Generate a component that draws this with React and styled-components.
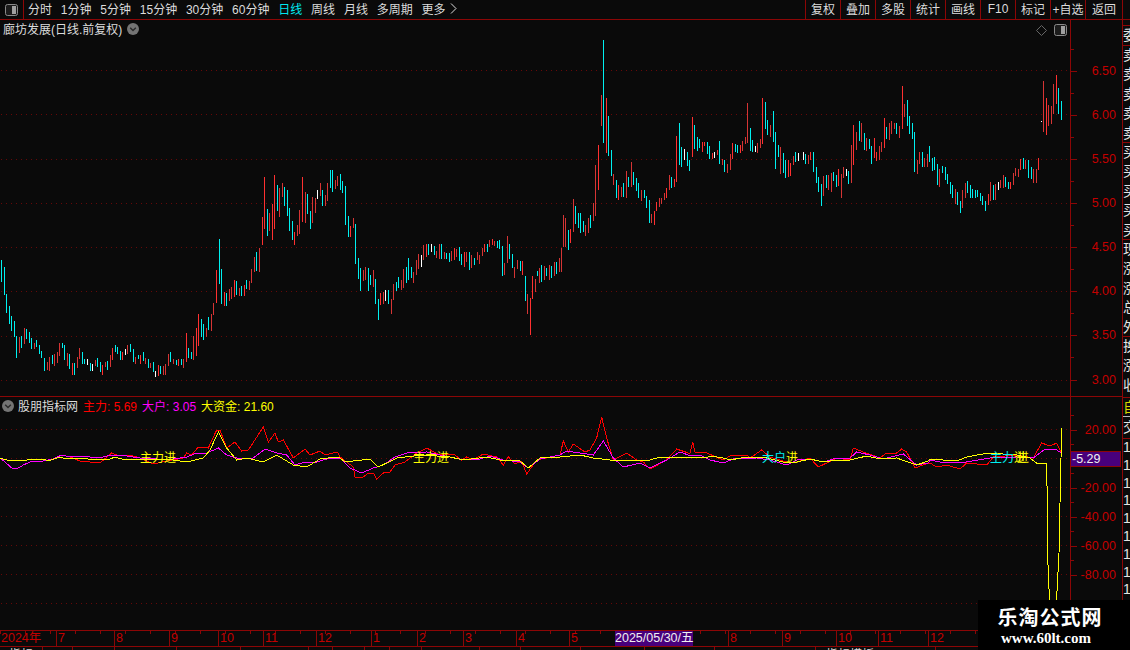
import React from "react";
import styled, { createGlobalStyle } from "styled-components";

const LINE = "#8c0606";
const CJK = '"Liberation Sans", "Noto Sans CJK SC", sans-serif';

const GlobalStyle = createGlobalStyle`
  html, body { margin: 0; padding: 0; background: #0a0a0a; overflow: hidden; }
  * { box-sizing: border-box; }
`;

// candle data, read off the picture: x y-top y-bottom colour (in 3x units)
const CANDLE_SEGMENTS = [
  [0, 170, "4 270 335 c|13 291 375 c|19 372 428 c|28 408 461 c|34 438 483 c|43 453 501 c|49 498 564 c|58 501 549 d|64 498 534 c|73 474 522 d|79 477 507 c|88 486 519 c|94 504 537 c|103 519 537 d|109 510 531 c|118 525 552 c|124 543 564 c|133 564 603 c|142 576 600 d|148 561 603 d|157 555 582 c|163 552 588 d|172 546 579 d|178 519 558 d|187 519 534 c|193 525 570 c|202 549 588 d|208 552 597 c|217 579 615 r|223 579 615 c|232 561 594 d|238 534 567 d|247 546 582 c|253 567 582 c|262 567 585 w|271 579 603 c|277 582 603 w|286 570 588 d|292 564 591 c|301 576 606 c|307 585 615 r|316 576 591 d|322 573 600 c|331 555 591 d|337 534 570 r|346 525 546 c|352 531 552 c|361 543 570 c|367 546 570 r|376 537 555 w|382 525 552 d|391 522 546 c|400 537 576 c|406 561 582 d|415 555 567 c|421 555 582 r|430 546 573 c|436 564 582 d|445 567 594 c|451 579 594 d|460 576 606 c|466 603 621 w|475 585 618 r|481 588 612 c|490 588 615 d|496 582 615 d|505 552 588 d|511 546 576 c|520 567 582 d|529 570 585 c|535 567 588 r|544 567 585 c|550 567 594 d|559 489 576 r|565 534 564 c|574 546 567 c|580 498 570 d|589 474 558 r|595 432 528 r|604 447 501 c|610 462 510 c|619 474 501 d|625 441 480 c|634 432 483 d|640 399 435 d|649 300 399 r|658 207 342 c|664 297 402 c|673 366 408 r|679 369 408 c|688 357 393 d|694 351 387 d|703 330 381 r|709 333 375 c|718 354 378 d|724 348 378 c|733 345 378 r|739 330 357 c|748 333 360 d|754 297 339 d|763 261 306 d|769 246 303 c|778 234 306 d|787 141 225 r|793 21 177 r|802 117 198 c|808 129 183 d|817 102 210 r|823 15 177 r|832 45 123 c|838 54 141 d|847 39 81 d|853 51 108 c|862 60 138 c|868 114 183 c|877 153 210 c|883 186 225 r|892 165 198 d|898 120 192 d|907 21 156 r|916 66 159 d|922 72 132 c|931 123 177 c|937 81 159 d|946 84 129 d|952 60 87 w|961 39 78 d|967 60 108 c|976 75 108 d|982 39 93 d|991 0 54 c|997 0 66 c|1006 30 57 d|1012 18 48 d|1021 12 60 c|1027 33 69 c|1036 48 165 c|1045 138 201 c"],
  [340, 170, "31 168 201 r|40 144 174 d|46 162 282 c|55 264 327 c|61 294 363 c|70 300 333 d|76 291 330 d|85 294 363 c|91 315 345 c|100 300 351 d|106 327 402 c|115 387 450 c|121 369 405 r|130 366 402 d|136 360 393 w|145 360 402 c|154 387 432 d|160 342 390 d|169 336 363 c|175 321 354 c|184 330 360 d|190 297 354 d|199 291 339 c|205 264 330 c|214 291 324 c|220 306 339 d|229 270 315 d|235 252 297 d|244 255 291 w|250 225 270 d|259 222 261 r|265 222 255 c|274 222 246 w|283 228 255 c|289 243 264 d|298 222 267 d|304 222 267 c|313 246 267 d|319 249 267 c|328 249 276 c|334 243 273 d|343 234 270 r|349 237 261 d|358 231 273 c|364 252 285 c|373 246 291 r|379 246 276 d|388 246 300 c|394 255 294 d|403 264 285 c|412 246 270 d|418 255 282 d|427 234 258 d|433 222 246 r|442 222 246 c|448 210 231 d|457 207 225 r|463 213 228 d|472 213 234 c|478 210 237 c|487 228 318 c|493 279 315 d|502 198 279 d|508 222 267 c|517 252 294 c|523 291 324 d|532 270 297 d|541 273 303 c|547 273 315 r|556 318 393 c|562 372 432 d|571 384 495 r|577 318 387 r|586 327 366 d|592 303 318 c"],
  [538, 230, "4 114 159 d|10 105 156 c|19 108 150 d|25 114 138 c|34 105 150 d|40 108 144 c|49 96 138 d|55 96 132 c|64 84 126 d|70 54 126 d"],
  [500, 30, "190 555 650 d|196 564 650 d|205 600 660 c|211 597 640 r|220 507 606 d|226 528 582 c|235 549 594 c|241 549 609 c|250 573 606 c|256 585 618 d|265 564 609 d|271 555 594 c|280 519 573 d|286 405 558 d|295 345 480 r|304 195 288 d|310 30 339 c|319 204 369 r|325 258 378 c|334 360 438 c|340 432 465 d|349 450 504 c|355 465 510 r|364 471 501 d|370 459 501 c|379 423 504 d|385 441 471 c|394 396 471 d|400 426 465 c|409 444 483 c|415 459 504 c|424 480 513 d|433 480 504 c|439 498 534 c|448 510 579 c|454 552 579 d|463 543 585 r|469 516 543 r|478 504 531 d|484 504 522 d|493 489 510 d|499 474 504 r|508 435 480 d|514 441 474 c|523 447 471 r|529 318 456 r|538 279 405 c|544 351 411 c|553 357 390 w|562 366 408 c|568 390 423 c|577 261 381 r|583 285 357 c|592 321 363 c|598 327 354 c|607 336 366 r|613 336 348 r|622 336 372 c|628 348 387 c|637 369 387 r|643 366 384 w|652 360 375 d|658 333 402 c|667 387 405 d|673 390 426 c|682 402 429 d|691 372 420 d|697 339 387 r|706 342 366 c|712 345 369 c|721 345 369 r|727 333 363 d|736 321 342 d|742 219 339 d|751 294 363 c|757 330 366 c|766 348 366 w|772 339 369 d|781 327 354 d|787 204 342 r|796 216 297 c|802 270 315 c|811 285 321 d|820 243 336 c|826 306 417 c|835 345 381 c|841 351 432 d|850 369 429 c|856 390 444 c|865 390 441 r|871 399 438 r|880 378 405 d|886 366 396 c|895 369 393 w"],
  [800, 70, "10 246 270 w|16 252 282 c|25 255 282 d|31 246 270 r|40 246 306 c|49 291 339 c|55 321 366 c|64 342 408 c|70 318 378 d|79 315 354 c|85 315 360 d|94 309 366 d|100 306 333 c|109 315 351 c|115 297 348 r|124 312 384 d|130 291 324 d|139 297 318 w|145 303 342 c|154 225 339 d|160 165 285 r|169 186 240 d|178 153 213 c|184 159 216 d|193 189 240 c|199 204 243 d|208 207 237 c|214 228 282 c|223 204 264 r|229 246 273 r|238 228 270 d|244 216 246 d|253 144 234 r|259 171 207 c|268 159 210 d|274 153 192 d|283 159 177 d|289 159 192 c|298 168 204 d|307 48 177 r|313 102 141 d|322 90 168 c|328 138 192 c|337 159 207 c|343 186 306 c|352 270 312 d|358 246 282 d|367 246 291 c|373 264 291 d|382 252 291 d|388 228 276 c|397 264 303 c|403 261 300 c|412 282 345 c|418 297 351 d|427 288 309 c|436 291 330 c|442 312 342 c|451 336 372 c|457 345 384 c|466 357 402 d|472 366 405 c|481 393 429 c|487 360 414 d|496 339 384 d|502 333 369 c|511 345 384 c|517 357 384 c|526 360 384 c|532 360 381 c|541 369 393 c|547 378 405 c|556 393 423 c|565 372 405 r|571 336 393 d|580 345 390 c|586 342 390 d|595 336 360 w|601 330 354 d|610 315 354 d|616 321 351 c|625 336 357 c|631 336 357 r|640 309 345 d|646 294 318 d|655 297 321 d|661 267 300 r|670 264 297 c|676 270 297 d|685 270 324 c|694 291 327 c|700 297 339 d|709 297 339 d|715 264 300 r|724 153 156 w|730 33 186 d|739 84 195 r|745 105 168 d|754 108 162 d|760 42 132 d|769 15 102 r|775 54 132 c|784 93 150 c"],
];

const CANDLE_COLORS = { r: "#ff3030", d: "#d63434", c: "#00f0f0", w: "#ffffff" };

const candles = CANDLE_SEGMENTS.flatMap(([x0, y0, list]) =>
  list.split("|").map((item) => {
    const [x, top, bottom, color] = item.split(" ");
    return {
      x: x0 + Math.floor(Number(x) / 3),
      y: y0 + Number(top) / 3,
      h: (Number(bottom) - Number(top)) / 3,
      color: CANDLE_COLORS[color],
    };
  })
);

// indicator lines, same idea: each piece has its own origin
const toPoints = (pieces) =>
  pieces
    .map(([x0, y0, list]) =>
      list
        .split(" ")
        .map((pair) => {
          const [x, y] = pair.split(",").map(Number);
          return `${x0 + x / 3},${Math.round(y0 + y / 3)}`;
        })
        .join(" ")
    )
    .join(" ");

const MAGENTA_LINE = toPoints([
  [0, 390, "0,205 15,215 35,235 50,238 70,225 90,215 130,212 160,208 185,195 210,200 240,198 270,200 300,205 330,195 380,197 420,205 470,208 520,208 560,200 590,190 620,188 655,175 680,195 710,205 760,205 795,178 830,188 860,195 885,225 915,215 950,215 990,205 1015,205"],
  [340, 410, "0,145 30,175 65,190 100,175 130,165 165,140 200,130 260,125 300,135 360,148 420,148 450,138 490,150 540,155 565,175 600,148 660,135 680,122 720,130 760,135 790,92 820,145 850,172 900,160 930,175 980,150 1020,125 1045,135"],
  [690, 410, "0,135 30,135 60,150 100,158 130,148 200,145 240,150 290,165 320,150 360,148 400,157 440,145 480,145 500,125 540,135 580,148 640,133 680,165 715,160"],
  [930, 390, "0,210 30,215 90,220 180,205 260,200 310,205 345,178 380,180 395,190"],
]);

const RED_LINE = toPoints([
  [0, 390, "0,205 15,215 35,235 50,238 70,225 90,215 130,212 160,208 185,195 210,200 240,212 270,215 300,220 335,188 350,195 390,195 420,205 460,222 500,212 550,205 560,190 575,195 595,170 625,175 650,120 660,120 680,175 705,155 725,182 745,180 790,110 805,155 825,130 835,155 850,150 880,205 915,178 930,195 960,182 975,195 1010,185 1015,190"],
  [340, 410, "0,140 40,170 45,200 70,200 85,190 100,188 110,207 130,190 150,187 165,165 195,155 230,128 260,115 300,135 340,132 365,150 380,140 400,150 430,133 470,140 490,165 505,140 525,162 545,152 560,192 590,150 660,135 670,92 685,125 700,102 735,125 750,120 770,85 785,20 800,85 820,150 860,128 890,150 910,155 930,178 980,150 1010,118 1045,130"],
  [690, 410, "0,130 8,95 15,125 50,130 100,150 125,135 170,135 180,145 215,120 240,140 290,155 320,155 360,145 385,170 410,160 440,145 480,150 490,115 520,125 570,145 590,128 620,130 635,118 650,125 675,175 715,158"],
  [930, 390, "0,220 20,230 50,225 90,238 110,220 170,225 190,200 260,195 310,205 335,158 360,168 380,160 395,190"],
]);

const YELLOW_LINE = toPoints([
  [0, 390, "0,205 30,212 130,208 145,212 180,200 200,208 230,203 300,210 330,208 345,200 365,207 500,208 560,215 610,205 630,180 655,125 680,175 710,210 740,205 790,217 830,195 880,225 920,230 960,208 1010,200"],
  [340, 410, "0,145 15,155 90,148 115,170 140,160 170,145 250,135 330,140 370,150 440,140 480,150 540,152 565,175 600,145 660,140 720,135 760,143 810,150 930,150 960,140 1045,142"],
  [690, 410, "0,142 50,145 60,138 100,145 120,150 170,140 220,140 280,155 320,155 360,148 400,155 440,150 480,150 530,138 570,148 620,145 680,165 715,152"],
  [930, 390, "0,208 80,212 110,200 140,195 180,190 260,195 300,205 320,218 348,218 352,310 353,500 358,620 361,760 377,760 380,625 387,490 390,340 395,115"],
]);

const PRICE_LINES = [70.5, 114.5, 159.5, 203.5, 247.5, 291.5, 336.5, 380.5];
const INDICATOR_LINES = [429.5, 458.5, 487.5, 516.5, 545.5, 574.5, 603.5];

const Page = styled.div`
  position: relative;
  width: 1130px;
  height: 650px;
  overflow: hidden;
  background: #0a0a0a;
  font-family: ${CJK};
  font-size: 12px;
  color: #dcdcdc;
`;

const TopBar = styled.div`
  display: flex;
  height: 20px;
  border-bottom: 1px solid ${LINE};
`;

const LayoutButton = styled.div`
  display: flex;
  align-items: center;
  justify-content: center;
  width: 24px;
  border-right: 1px solid ${LINE};
`;

const PeriodList = styled.div`
  display: flex;
  align-items: center;
  gap: 8.8px;
  padding: 0 0 2px 4px;
  white-space: nowrap;
`;

const Period = styled.span`
  color: ${(p) => (p.$active ? "#00e8f0" : "#dcdcdc")};
`;

const ArrowWrap = styled.span`
  display: flex;
  margin-left: -4px;
`;

const ToolList = styled.div`
  display: flex;
  margin-left: auto;
  padding-right: 7px;
`;

const Tool = styled.div`
  display: flex;
  align-items: center;
  justify-content: center;
  width: ${(p) => p.$w || 35}px;
  padding-bottom: 2px;
  white-space: nowrap;
  border-left: 1px solid ${LINE};
  &:last-child {
    border-right: 1px solid ${LINE};
  }
`;

const Workspace = styled.div`
  display: grid;
  grid-template-columns: 1070px 52px 8px;
  grid-template-rows: 377px 234px 16px 10px;
`;

const Pane = styled.div`
  position: relative;
  overflow: hidden;
  border-bottom: 1px solid ${LINE};
`;

const PaneHead = styled.div`
  position: absolute;
  left: ${(p) => p.$left}px;
  top: 0;
  display: flex;
  align-items: center;
  gap: ${(p) => p.$gap}px;
  white-space: nowrap;
`;

const PaneTools = styled.div`
  position: absolute;
  right: 3px;
  top: 4px;
  display: flex;
  align-items: center;
  gap: 7px;
`;

const Reading = styled.span`
  color: ${(p) => p.$color};
`;

const DoubledReading = styled(Reading)`
  text-shadow: 3px 0 0 ${(p) => p.$color};
`;

const Readings = styled.div`
  display: flex;
  gap: 5px;
  margin-left: 1px;
`;

const ChartSvg = styled.svg`
  display: block;
  width: 1070px;
  height: 100%;
`;

const Signal = styled.div`
  position: absolute;
  left: ${(p) => p.$left}px;
  top: 53px;
  line-height: 16px;
  white-space: nowrap;
  color: ${(p) => p.$color};
`;

const Scale = styled.div`
  position: relative;
  display: grid;
  grid-auto-rows: ${(p) => p.$step}px;
  padding-top: ${(p) => p.$pad}px;
  border-left: 1px solid ${LINE};
  border-bottom: 1px solid ${LINE};
  overflow: hidden;
`;

const ScaleRow = styled.div`
  position: relative;
  display: flex;
  align-items: center;
  justify-content: flex-end;
  padding-right: 6px;
  color: #c40000;
  font-size: 12.5px;
  &::before {
    content: "";
    position: absolute;
    left: 0;
    top: 50%;
    width: 6px;
    height: 1px;
    background: ${LINE};
  }
  &::after {
    content: "";
    position: absolute;
    left: 0;
    top: 0;
    width: 3px;
    height: 1px;
    background: ${LINE};
  }
`;

const CurrentValue = styled.div`
  position: absolute;
  left: 0;
  right: 1px;
  top: 54px;
  height: 16px;
  padding-left: 1px;
  background: #48007c;
  border: 1px solid ${LINE};
  border-left: 0;
  color: #f0f0f0;
  font-size: 12.5px;
  line-height: 14px;
`;

const Side = styled.div`
  grid-column: 3;
  grid-row: 1 / 5;
  width: 8px;
  padding-top: 5px;
  border-left: 1px solid ${LINE};
  overflow: hidden;
`;

const SideBlock = styled.div`
  height: ${(p) => p.$h}px;
  width: 24px;
  border-top: 1px solid ${(p) => p.$edge || LINE};
  color: ${(p) => p.$color || "#e4e4e4"};
  font-size: 14px;
  line-height: ${(p) => p.$line || 19.4}px;
  white-space: pre-line;
`;

const TimeAxis = styled.div`
  grid-column: 1 / 3;
  display: flex;
  overflow: hidden;
  border-bottom: 1px solid ${LINE};
  background: repeating-linear-gradient(to right, ${LINE} 0 1px, transparent 1px 25px) 0 0 / 100% 3px no-repeat;
`;

const TimeCell = styled.div`
  flex: none;
  width: ${(p) => p.$w}px;
  padding-left: 1px;
  border-left: ${(p) => (p.$plain ? "0" : `1px solid ${LINE}`)};
  color: #c40000;
  font-size: 12.5px;
  line-height: 15px;
  white-space: nowrap;
  overflow: hidden;
`;

const TimeCursor = styled.div`
  flex: none;
  width: 78px;
  background: #48007c;
  color: #f0f0f0;
  font-size: 12.5px;
  line-height: 15px;
  text-align: center;
  white-space: nowrap;
`;

const TabRow = styled.div`
  grid-column: 1 / 3;
  display: flex;
  overflow: hidden;
`;

const Tab = styled.div`
  flex: none;
  width: ${(p) => p.$w}px;
  padding-left: ${(p) => p.$pad || 4}px;
  border-right: 1px solid ${LINE};
  line-height: 16px;
  white-space: nowrap;
  overflow: hidden;
`;

const Watermark = styled.div`
  position: absolute;
  left: 978px;
  top: 600px;
  width: 152px;
  height: 50px;
  padding-top: 6px;
  background: #000;
  color: #fff;
  text-align: center;
  font-family: "Liberation Serif", "Noto Sans CJK SC", serif;
  font-weight: 700;
`;

const WatermarkName = styled.div`
  font-size: 20px;
  line-height: 24px;
  letter-spacing: 1px;
  padding-right: 8px;
`;

const WatermarkUrl = styled.div`
  font-size: 15px;
  line-height: 17px;
  padding-right: 16px;
`;

const PanelIcon = () => (
  <svg width="13" height="12" viewBox="0 0 13 12">
    <rect x="0.5" y="0.5" width="12" height="11" rx="2" fill="#1c1c1c" stroke="#8a8a8a" />
    <rect x="7" y="2" width="4" height="8" fill="#a0a0a0" />
  </svg>
);

const DiamondIcon = () => (
  <svg width="11" height="11" viewBox="0 0 11 11">
    <path d="M5.5 0.5 L10.5 5.5 L5.5 10.5 L0.5 5.5 Z" fill="none" stroke="#666" />
  </svg>
);

const ChevronBadge = () => (
  <svg width="12" height="12" viewBox="0 0 12 12">
    <circle cx="6" cy="6" r="6" fill="#747474" />
    <path d="M3.2 4.8 L6 7.6 L8.8 4.8" fill="none" stroke="#2a2a2a" strokeWidth="1.4" />
  </svg>
);

const MoreArrow = () => (
  <svg width="7" height="11" viewBox="0 0 7 11">
    <path d="M1 0.5 L6 5.5 L1 10.5" fill="none" stroke="#dcdcdc" />
  </svg>
);

const GridLines = ({ rows }) =>
  rows.map((y) => (
    <line key={y} x1="1" x2="1070" y1={y} y2={y} stroke="#660808" strokeDasharray="1 4" />
  ));

const PERIODS = ["分时", "1分钟", "5分钟", "15分钟", "30分钟", "60分钟", "日线", "周线", "月线", "多周期", "更多"];
const TOOLS = ["复权", "叠加", "多股", "统计", "画线", "F10", "标记", "+自选"];
const PRICES = ["6.50", "6.00", "5.50", "5.00", "4.50", "4.00", "3.50", "3.00"];
const LEVELS = ["20.00", "", "-20.00", "-40.00", "-60.00", "-80.00"];
const MONTHS_A = [["7", 58], ["8", 55], ["9", 49], ["10", 45], ["11", 53], ["12", 55], ["1", 46], ["2", 46], ["3", 53], ["4", 53], ["5", 46]];
const MONTHS_B = [["8", 54], ["9", 54], ["10", 42], ["11", 50], ["12", 194]];
const TABS = [["指标", 43, 9], ["+", 30, 4], ["", 42], ["", 62], ["", 64], ["", 68], ["", 24], ["", 32], ["", 25], ["", 32], ["", 58], ["", 41], ["", 60], ["", 64], ["", 70], ["", 101], ["指标模板", 120, 10]];

const App = () => {
  return (
    <Page>
      <GlobalStyle />
      <TopBar>
        <LayoutButton>
          <PanelIcon />
        </LayoutButton>
        <PeriodList>
          {PERIODS.map((name) => (
            <Period key={name} $active={name === "日线"}>
              {name}
            </Period>
          ))}
          <ArrowWrap>
            <MoreArrow />
          </ArrowWrap>
        </PeriodList>
        <ToolList>
          {TOOLS.map((name) => (
            <Tool key={name}>{name}</Tool>
          ))}
          <Tool $w={38}>返回</Tool>
        </ToolList>
      </TopBar>

      <Workspace>
        <Pane>
          <ChartSvg viewBox="0 20 1070 376" shapeRendering="crispEdges">
            <GridLines rows={PRICE_LINES} />
            {candles.map((c, i) => (
              <rect key={i} x={c.x} y={c.y} width="1" height={c.h} fill={c.color} />
            ))}
          </ChartSvg>
          <PaneHead $left={3} $gap={5}>
            廊坊发展(日线.前复权)
            <ChevronBadge />
          </PaneHead>
          <PaneTools>
            <DiamondIcon />
            <PanelIcon />
          </PaneTools>
        </Pane>
        <Scale $step={44.15} $pad={28.5}>
          {PRICES.map((price) => (
            <ScaleRow key={price}>{price}</ScaleRow>
          ))}
        </Scale>
        <Side>
          <SideBlock $h={20} $line={18}>委</SideBlock>
          <SideBlock $h={97}>{"卖\n卖\n卖\n卖\n卖"}</SideBlock>
          <SideBlock $h={97}>{"买\n买\n买\n买\n买"}</SideBlock>
          <SideBlock $h={97}>{"现\n涨\n涨\n总\n外"}</SideBlock>
          <SideBlock $h={61}>{"换\n涨\n收"}</SideBlock>
          <SideBlock $h={19} $color="#d8d800" $line={18}>自</SideBlock>
          <SideBlock $h={22} $edge="#bbb" $line={20}>交</SideBlock>
          <SideBlock $h={200} $line={17.8}>{"1\n1\n1\n1\n1\n1\n1\n1\n1\n1"}</SideBlock>
        </Side>

        <Pane>
          <ChartSvg viewBox="0 397 1070 233" shapeRendering="crispEdges">
            <GridLines rows={INDICATOR_LINES} />
            <polyline points={RED_LINE} fill="none" stroke="#ff0000" />
            <polyline points={MAGENTA_LINE} fill="none" stroke="#ff00ff" />
            <polyline points={YELLOW_LINE} fill="none" stroke="#ffff00" />
          </ChartSvg>
          <PaneHead $left={2} $gap={4}>
            <ChevronBadge />
            <span>股朋指标网</span>
            <Readings>
              <Reading $color="#ff0000">主力: 5.69</Reading>
              <Reading $color="#ff00ff">大户: 3.05</Reading>
              <Reading $color="#ffff00">大资金: 21.60</Reading>
            </Readings>
          </PaneHead>
          <Signal $left={140} $color="#ffff00">主力进</Signal>
          <Signal $left={413} $color="#ffff00">主力进</Signal>
          <Signal $left={762} $color="#00f0f0">
            大户<Reading $color="#ffff00">进</Reading>
          </Signal>
          <Signal $left={990} $color="#00f0f0">
            主力<DoubledReading $color="#ffff00">进</DoubledReading>
          </Signal>
        </Pane>
        <Scale $step={29} $pad={18}>
          {LEVELS.map((level, i) => (
            <ScaleRow key={i}>{level}</ScaleRow>
          ))}
          <CurrentValue>-5.29</CurrentValue>
        </Scale>

        <TimeAxis>
          <TimeCell $w={56} $plain>2024年</TimeCell>
          {MONTHS_A.map(([month, width], i) => (
            <TimeCell key={i} $w={width}>{month}</TimeCell>
          ))}
          <TimeCursor>2025/05/30/五</TimeCursor>
          <TimeCell $w={35} $plain />
          {MONTHS_B.map(([month, width], i) => (
            <TimeCell key={i} $w={width}>{month}</TimeCell>
          ))}
        </TimeAxis>
        <TabRow>
          {TABS.map(([label, width, pad], i) => (
            <Tab key={i} $w={width} $pad={pad}>{label}</Tab>
          ))}
        </TabRow>
      </Workspace>

      <Watermark>
        <WatermarkName>乐淘公式网</WatermarkName>
        <WatermarkUrl>www.60lt.com</WatermarkUrl>
      </Watermark>
    </Page>
  );
};

export default App;
